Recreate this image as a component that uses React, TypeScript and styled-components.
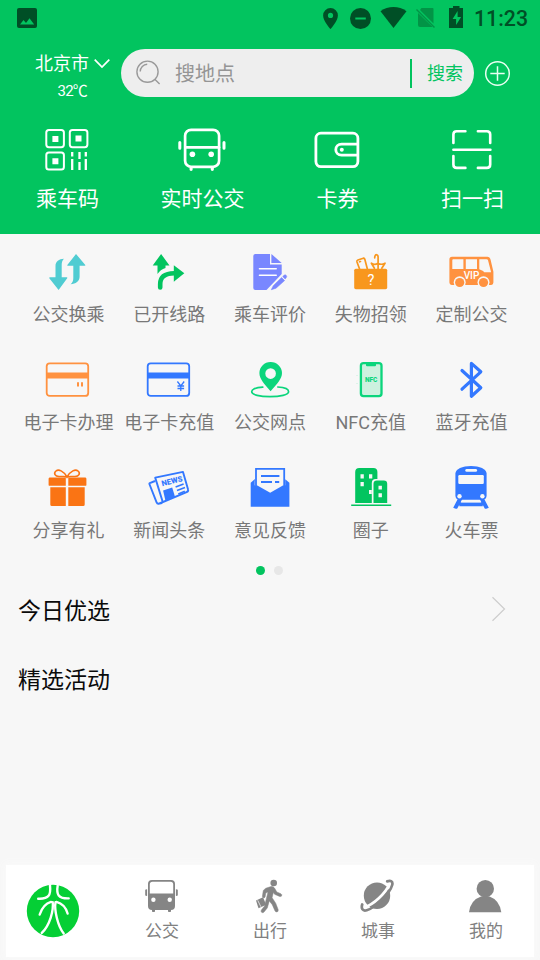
import React from "react";
import styled, { createGlobalStyle } from "styled-components";

const GREEN = "#02c45f";
const DARK = "#004f26";

const GlobalStyle = createGlobalStyle`
  * { box-sizing: border-box; }
  body {
    margin: 0;
    background: #f7f7f7;
    font-family: Roboto, "Noto Sans CJK SC", sans-serif;
  }
  svg { display: block; flex: none; }
`;

const Screen = styled.div`
  width: 540px;
  height: 960px;
  display: flex;
  flex-direction: column;
  background: #f7f7f7;
  overflow: hidden;
`;

const Header = styled.header`
  height: 234px;
  flex: none;
  background: ${GREEN};
  color: #fff;
`;

const StatusBar = styled.div`
  height: 36px;
  display: flex;
  justify-content: space-between;
  padding: 0 12px 0 16px;
`;

const StatusGroup = styled.div`
  display: flex;
  align-items: center;
`;

const Clock = styled.span`
  margin-left: 8px;
  width: 54px;
  font-size: 21.3px;
  font-weight: 500;
  line-height: 36px;
  color: ${DARK};
  white-space: nowrap;
  padding-top: 1px;
`;

const SearchRow = styled.div`
  height: 61px;
  padding: 13px 29px 0 35px;
  display: flex;
`;

const City = styled.div`
  width: 86px;
  flex: none;
  padding-top: 1px;
`;

const CityName = styled.div`
  display: flex;
  align-items: center;
  gap: 5px;
  height: 28px;
  font-size: 18px;
  line-height: 28px;
`;

const Temperature = styled.div`
  width: 52px;
  text-align: right;
  font-size: 15px;
  line-height: 26px;
  letter-spacing: -0.8px;
`;

const SearchBox = styled.div`
  width: 353px;
  height: 48px;
  flex: none;
  border-radius: 24px;
  background: #eee;
  display: flex;
  align-items: center;
  padding: 0 11px 0 14px;
`;

const Placeholder = styled.span`
  flex: 1;
  margin-left: 12px;
  padding-top: 2px;
  font-size: 20px;
  line-height: 46px;
  color: #959595;
`;

const SearchButton = styled.span`
  height: 29px;
  border-left: 2px solid ${GREEN};
  padding-left: 15px;
  font-size: 18px;
  line-height: 30px;
  color: ${GREEN};
`;

const AddButton = styled.div`
  margin: 11px 0 0 10px;
`;

const QuickActions = styled.div`
  display: grid;
  grid-template-columns: repeat(4, 1fr);
  padding-top: 25px;
`;

const QuickAction = styled.div`
  display: flex;
  flex-direction: column;
  align-items: center;
`;

const QuickLabel = styled.span`
  margin-top: 6px;
  font-size: 21px;
  line-height: 30px;
`;

const Services = styled.section`
  display: grid;
  grid-template-columns: repeat(5, 1fr);
  grid-auto-rows: 108px;
  padding: 14px 18px 0;
  height: 327px;
  flex: none;
`;

const Service = styled.div`
  display: flex;
  flex-direction: column;
  align-items: center;
`;

const ServiceLabel = styled.span`
  margin-top: 5px;
  font-size: 18px;
  line-height: 28px;
  color: #787878;
  white-space: nowrap;
`;

const Pager = styled.div`
  height: 14px;
  padding: 5px 1px 0 0;
  flex: none;
  display: flex;
  justify-content: center;
  gap: 9px;
`;

const Dot = styled.i<{ $active?: boolean }>`
  width: 9px;
  height: 9px;
  border-radius: 50%;
  background: ${(p) => (p.$active ? GREEN : "#e7e7e7")};
`;

const SectionTitle = styled.h2`
  height: 69px;
  margin: 0;
  padding: 0 33px 0 18px;
  display: flex;
  align-items: center;
  justify-content: space-between;
  font-size: 23px;
  font-weight: 400;
  color: #0a0a0a;
`;

const Sections = styled.main`
  flex: 1;
  min-height: 0;
  margin-top: -1px;
`;

const NavBar = styled.nav`
  height: 92px;
  flex: none;
  margin: 0 6.5px 3px 6px;
  background: #fff;
  box-shadow: 0 0 8px 2px #fafafa;
  display: flex;
`;

const NavItem = styled.div`
  width: 108px;
  flex: none;
  display: flex;
  flex-direction: column;
  align-items: center;
  padding-top: 13px;
  &:last-child { margin-right: -7px; }
`;

const LogoSlot = styled.div`
  width: 102px;
  flex: none;
  padding: 19px 0 0 20px;
`;

const NavLabel = styled.span`
  margin-top: 4px;
  font-size: 17px;
  line-height: 27px;
  color: #808080;
`;

const quick = [
  {
    label: "乘车码",
    icon: (
      <g fill="none" stroke="#fff" strokeWidth="2">
        <rect x="6.3" y="8" width="17.6" height="17.2" rx="2.6" />
        <rect x="29.8" y="8" width="17.6" height="17.2" rx="2.6" />
        <rect x="6.3" y="30.4" width="17.6" height="17.2" rx="2.6" />
        <path d="M12.400 14h6v6h-6zM35.500 13.500h6v6h-6zM12.400 36.200h6v6h-6z" fill="#fff" stroke="none" />
        <path d="M32.200 30v4.500M32.200 37v11M39.500 30v7M39.500 40v8M45.800 30v4.500M45.800 37v11" strokeWidth="2.300" />
      </g>
    ),
  },
  {
    label: "实时公交",
    icon: (
      <g fill="none" stroke="#fff" strokeWidth="2.700" strokeLinecap="round" transform="translate(-.9 0)">
        <rect x="11" y="7.800" width="34" height="37" rx="6" />
        <path d="M11.400 25.300h33.500" />
        <path d="M5.700 20.600v5.600M49.900 20.600v5.600" strokeWidth="3" />
        <path d="M17 46.500v.8M38.200 46.500v.8" strokeWidth="3.200" />
        <circle cx="18.300" cy="32.300" r="2.800" fill="#fff" stroke="none" />
        <circle cx="37.100" cy="32.300" r="2.800" fill="#fff" stroke="none" />
      </g>
    ),
  },
  {
    label: "卡券",
    icon: (
      <g fill="none" stroke="#fff" strokeWidth="2.800" transform="translate(-.9 0)">
        <rect x="6.800" y="11.200" width="42" height="33.400" rx="5" />
        <path d="M48.500 22.200h-16c-3.500 0-5.800 2.400-5.800 5.500s2.300 5.500 5.800 5.500h16" />
        <circle cx="32.700" cy="27.800" r="2" fill="#fff" stroke="none" />
      </g>
    ),
  },
  {
    label: "扫一扫",
    icon: (
      <g fill="none" stroke="#fff" strokeWidth="2.600" strokeLinecap="round" transform="translate(-.6 0)">
        <path d="M9 21V12.500Q9 9.200 12.300 9.200H21M33.500 9.200h9q3.300 0 3.300 3.300V21M9 34v8.500q0 3.400 3.300 3.400H21M33.500 45.900h9q3.300 0 3.300-3.400V34M9 27.700h37" />
      </g>
    ),
  },
];

const ORANGE = "#ff9240";
const BLUE = "#3378ff";
const MINT = "#0bd57c";

const Card = ({ color }: { color: string }) => (
  <>
    <rect x="2.700" y="7.300" width="41.500" height="32.600" rx="3" fill="none" stroke={color} strokeWidth="1.800" />
    <path d="M2.300 16.600h42.300v5.900H2.300z" fill={color} />
  </>
);

const services = [
  {
    label: "公交换乘",
    icon: (
      <g fill="#50ccd2">
        <path d="M14.600 42 5.300 30.200Q4.900 29.300 6 29.300h5.500V18c0-4.500 3.500-7 8.400-7.200-1.400 1.500-2.200 3.300-2.200 6v12.500h5q1 .1.500 1z" />
        <path d="m32 6 9.300 11q.4.800-.6.800h-5.100v11c0 4.500-3.800 7.200-9 7.500 1.900-1.600 2.700-3.700 2.700-6.400V17.800h-5.500q-1 0-.5-.8z" />
      </g>
    ),
  },
  {
    label: "已开线路",
    icon: (
      <g fill={GREEN}>
        <path d="m16.100 6 8.400 11.400h-4L20.500 20c-3.500 1.100-6 3.100-8 6v-8.500H7.700z" />
        <path d="M15.200 39.500V36q0-10.500 14-10.700" fill="none" stroke={GREEN} strokeWidth="4.600" strokeLinecap="round" />
        <path d="m28.800 17.300 10.500 8-10.500 8.500z" />
      </g>
    ),
  },
  {
    label: "乘车评价",
    icon: (
      <g fill="#7987ff">
        <path d="M9.400 6H24v10.500h11.700V26L20.500 42H9.400q-2.100 0-2.100-2.100V8.100Q7.300 6 9.400 6z" />
        <path d="m25.400 6 10.300 9H25.400z" />
        <path d="M13.500 20.700h16.700M13.500 27.300h16.700" stroke="#fff" strokeWidth="1.600" strokeLinecap="round" />
        <path d="m27.300 37.700 8.300-8.100 3 3-8.600 7.600-4.700 1.500zM36.700 28.600l1.400-1.300q1.100-.9 2.100.1t.1 2.100l-1.100 1.500z" stroke="#7987ff" strokeWidth=".6" />
      </g>
    ),
  },
  {
    label: "失物招领",
    icon: (
      <g>
        <g fill="none" stroke="#f8971d" strokeWidth="1.700" strokeLinecap="round" strokeLinejoin="round">
          <path d="m12.600 21-2.700-7.300q-.2-1.300 1-1.700l5.400-1.800q1.200-.2 1.500 1l2.500 9.500M12.500 13.800l1-.3" />
          <path d="M27.700 9.800c0-4.200 3.700-4 3.400 0V21M27.400 20.300l-3-5.100c2.500 1.700 4.300 1.500 6.500 0 2.400 1.500 4 1.700 7.100 0l-3.200 5.100" />
        </g>
        <rect x="7.200" y="20.700" width="33" height="20.500" rx="1.600" fill="#f8971d" />
        <text x="24" y="36.700" textAnchor="middle" fill="#fff" fontFamily="Roboto" fontSize="14.500">?</text>
      </g>
    ),
  },
  {
    label: "定制公交",
    icon: (
      <g>
        <path d="M4 8.700h35.300q2.600 0 3.300 3l2.800 12v10.800q0 2.400-2.200 2.400H3.700q-2.300 0-2.300-2.400V11.200Q1.400 8.700 4 8.700z" fill={ORANGE} />
        <g fill="#f7f7f7">
          <path d="M5.200 11.200h10.200V21H4.300v-8.800q0-1 .9-1zM17.800 11.200H29V21H17.800zM31.300 11.200h7.200q1.300 0 1.600 1.300l3 11.700h-6c-1 0-1.400-.4-2-1.300l-3.800-1.600z" />
          <circle cx="11.700" cy="34.300" r="6" /><circle cx="35.500" cy="34.300" r="6" />
        </g>
        <circle cx="11.700" cy="34.500" r="4.600" fill={ORANGE} /><circle cx="35.500" cy="34.500" r="4.600" fill={ORANGE} />
        <text x="23.500" y="31.200" textAnchor="middle" fill="#fff" fontFamily="Roboto" fontWeight="500" fontSize="10">VIP</text>
      </g>
    ),
  },
  {
    label: "电子卡办理",
    icon: (
      <g>
        <Card color={ORANGE} />
        <path d="M33 26.300h2v4.200h-2zM37 26.300h2v4.200h-2z" fill={ORANGE} />
      </g>
    ),
  },
  {
    label: "电子卡充值",
    icon: (
      <g>
        <Card color={BLUE} />
        <path d="m32.400 25.500 3.400 4.500 3.400-4.500M35.800 30v5M32.500 30h6.600M32.500 32.500h6.600" fill="none" stroke={BLUE} strokeWidth="1.300" />
      </g>
    ),
  },
  {
    label: "公交网点",
    icon: (
      <g>
        <path d="M24.600 6a11 11 0 0 0-11.200 11c0 6 4.600 10.500 11.200 18.200C31.200 27.500 36 23 36 17A11.200 11.200 0 0 0 24.600 6zm0 6.300a5.300 5.300 0 1 1 0 10.600 5.300 5.300 0 0 1 0-10.600z" fill={MINT} fillRule="evenodd" />
        <path d="M16.800 31.200C9 31.500 5.600 33.600 5.700 35.800c0 3 8.200 4.900 18.300 4.900s18.600-1.900 18.600-5c0-2.200-3.600-4.500-10.800-4.700" fill="none" stroke={MINT} strokeWidth="1.700" strokeLinecap="round" />
      </g>
    ),
  },
  {
    label: "NFC充值",
    icon: (
      <g>
        <rect x="13.900" y="7.200" width="20.600" height="33" rx="2.600" fill="#cdf1df" stroke={MINT} strokeWidth="2.300" />
        <path d="M19 7h10v2.300q0 1-1 1h-8q-1 0-1-1z" fill={MINT} />
        <path d="M10 19v1M10 27v1" stroke="#b5efd3" strokeWidth=".8" />
        <text x="24.200" y="26.200" textAnchor="middle" fill={MINT} fontFamily="Roboto" fontWeight="900" fontSize="6.500">NFC</text>
      </g>
    ),
  },
  {
    label: "蓝牙充值",
    icon: (
      <path d="m14 14.500 18.800 17.200-9.400 8.500V7.400l9.400 8.400L14 33.200" fill="none" stroke={BLUE} strokeWidth="3.200" strokeLinecap="round" strokeLinejoin="round" />
    ),
  },
  {
    label: "分享有礼",
    icon: (
      <g fill="#fa7414">
        <path d="M6 13.400h15.800v8.400H5.100q-.5 0-.5-.8v-6.200q0-1.400 1.400-1.400zM24.300 13.400H41q1.400 0 1.400 1.400V21q0 .8-.5.800H24.300zM6.300 23.200h15.500v18.700H7.800q-1.500 0-1.500-1.500zM24.300 23.200h16.400v17.200q0 1.500-1.500 1.500H24.300z" />
        <path d="M23 13c-3.500-6.300-8.500-8.100-11-6-2.700 2.300-1 5.300 3 5.500 3.500.1 6-.5 8 .5 2-1 4.500-.4 8-.5 4-.2 5.700-3.200 3-5.500-2.500-2.100-7.500-.3-11 6z" fill="none" stroke="#fa7414" strokeWidth="1.600" />
      </g>
    ),
  },
  {
    label: "新闻头条",
    icon: (
      <g>
        <path d="m10 17-5.200 2.100q-.6.300-.4.900l7.200 18.300q.8 2 2.800 1.200L41.600 28q2.100-.7 1.400-2.800L38 7.900 10.200 13.600l7 22.700q.9 3.400-3 3.300" fill="none" stroke={BLUE} strokeWidth="1.900" strokeLinejoin="round" />
        <path d="m18.100 26.400 9.100-2.800 2.800 9.100-9.500 4.400z" fill={BLUE} />
        <path d="m30.600 23 8-3M32 26.500l8-3M33.300 30l6.500-2.700" stroke={BLUE} strokeWidth="1.600" />
        <text x="17.300" y="22.200" transform="rotate(-14 17.300 22.200)" fill={BLUE} fontFamily="Roboto" fontWeight="900" fontSize="7.700">NEWS</text>
      </g>
    ),
  },
  {
    label: "意见反馈",
    icon: (
      <g fill={BLUE}>
        <path d="M4.700 18.700 9 15l-.3 2.800v3.400L24.200 30l15-8.800v-6l4.200 3.500v24H4.700z" />
        <path d="M10 21.800V4.800h28.200v17L24.200 29.900z" fill="#f7f7f7" stroke={BLUE} strokeWidth="1.800" />
        <path d="M15 12h18.400M15 18h11M29 18h4.200" stroke={BLUE} strokeWidth="1.800" />
      </g>
    ),
  },
  {
    label: "圈子",
    icon: (
      <g fill={GREEN}>
        <path d="M8.200 39V8q0-4 4-4h14.200q4 0 4 4v7h-1.600q-4 0-4 4v20z" />
        <path d="M26.500 39V19.800q0-3.400 3.400-3.400h6.900q3.400 0 3.400 3.400V39z" />
        <path d="M4.200 41.200h40" stroke={GREEN} strokeWidth="1.600" />
        <path d="M13.500 10.200h3.300v4.300h-3.300zM22 10.200h3.300v4.300H22zM13.500 18h3.300v4.300h-3.300zM22 26h2.800v4H22zM31.500 21.800h3.400v3.800h-3.400zM31.500 29.300h3.400v3.900h-3.400z" fill="#f7f7f7" />
      </g>
    ),
  },
  {
    label: "火车票",
    icon: (
      <g fill={BLUE}>
        <path d="M12.800 33.500 7 44.700M33.200 33.500 39 44.700M11.300 40.200h23.500" stroke={BLUE} strokeWidth="4" />
        <path d="M7.400 9.500C7.400 5 14.500 2 23 2s15.600 3 15.600 7.500v21.800q0 4.500-4.500 4.500H12q-4.600 0-4.600-4.500z" />
        <g fill="#f7f7f7">
          <rect x="10.300" y="11" width="25.500" height="9" rx="1.200" />
          <rect x="17.300" y="5" width="11.800" height="2.800" rx="1.400" />
          <circle cx="11.500" cy="32.300" r="2.200" /><circle cx="34.400" cy="32.300" r="2.200" />
          <path d="M14.200 36h17.600l1.200 2.500H13z M4 44.800h38V48H4z" />
        </g>
      </g>
    ),
  },
];

const nav = [
  {
    label: "公交",
    icon: (
      <g fill="#858585">
        <path d="M8 2h19q4 0 4 4v22q0 4-4 4v1.200q0 .8-.8.8h-1.400q-.8 0-.8-.8V32H11v1.200q0 .8-.8.800H8.800q-.8 0-.8-.8V32q-4 0-4-4V6q0-4 4-4zM1.200 12q0-.7 1.900-.7V18q-1.900 0-1.900-.7zM33.800 12q0-.7-1.900-.7V18q1.900 0 1.900-.7z" />
        <path d="M8.500 3.800h18q2.700 0 2.700 2.700v9H5.800v-9q0-2.700 2.700-2.700z" fill="#fff" />
        <circle cx="9.400" cy="21.800" r="2.200" fill="#fff" /><circle cx="25.700" cy="21.800" r="2.200" fill="#fff" />
      </g>
    ),
  },
  {
    label: "出行",
    icon: (
      <g fill="#858585">
        <circle cx="21.700" cy="5" r="3.300" />
        <path d="M13.800 10.200 19 8.600q2.300-.4 3.500 1.400l2.300 4 4 1.700q1.600.9.800 2.200-.7.900-2 .5l-5-2.100-1.300-1.700-1.200 5.100 3.600 5.500 2.500 6.500q.4 2-1.300 2.200-1.400.1-2-1.200l-2.600-6-3-3.800-2 7-3.300 4.200q-1.200 1.100-2.400.2-1-1-.2-2.300l3.200-4 3.400-14-2.200 1-.7 4q-.6 1.200-1.700.8-1-.4-1-1.500l.9-5.900z" stroke="#858585" strokeWidth=".5" />
        <path d="m4 22.500 7-3.200 3.200 7.500-7.700 3.500z" /><path d="m5.700 22.300 3.200 6.500" stroke="#fff" strokeWidth=".7" />
      </g>
    ),
  },
  {
    label: "城事",
    icon: (
      <g>
        <circle cx="17" cy="17.700" r="13.200" fill="#858585" />
        <path d="M4 29.500C13.500 26.500 25.500 15.500 29.500 6" fill="none" stroke="#fff" strokeWidth="2.800" />
        <path d="M2.200 26.500c-1.200 4 .4 7 4.600 5.700C16.500 29 29.800 15.500 32.200 7c1-3.700-1.500-4.800-5-3.600" fill="none" stroke="#858585" strokeWidth="2.700" strokeLinecap="round" />
      </g>
    ),
  },
  {
    label: "我的",
    icon: (
      <g fill="#858585">
        <circle cx="17.300" cy="10.700" r="8.700" />
        <path d="M1 34.300Q2.500 22 13 18.500h8.500Q31.500 22 33.300 34.300z" />
      </g>
    ),
  },
];

const StatusIcons = () => (
  <svg width="146" height="36" viewBox="320 0 146 36" fill={DARK}>
    <path d="M330.500 8a7.400 7.400 0 0 0-7.400 7.400c0 5.500 7.400 13.600 7.400 13.600s7.400-8.100 7.400-13.600a7.400 7.400 0 0 0-7.400-7.400zm0 4.800a2.600 2.600 0 1 1 0 5.200 2.600 2.600 0 0 1 0-5.200z" fillRule="evenodd" />
    <circle cx="360.500" cy="18.500" r="10.500" />
    <path d="M355.300 18.500h10.500" stroke={GREEN} strokeWidth="2" />
    <path d="M380.500 11.300c7.500-5.600 18.500-5.600 26 0L393.500 28z" />
    <g fill="#029446">
      <path d="m421.500 8 11 .1q1 0 1 1v14.500L420 10zM418 13l14.600 14h-12.500q-2.100 0-2.100-2.100z" />
      <path d="m416.500 9.500 18 18" stroke="#029446" strokeWidth="1.500" />
    </g>
    <path d="M453 6h6.500v2h3.500v20h-14V8h4zM457.600 11l-5 8h3.500v6l5-8h-3.500z" fillRule="evenodd" />
  </svg>
);

export default function App() {
  return (
    <>
      <GlobalStyle />
      <Screen>
        <Header>
          <StatusBar>
            <StatusGroup>
              <svg width="22" height="36" viewBox="16 0 22 36">
                <rect x="17" y="8" width="20" height="20" rx="2" fill={DARK} />
                <path d="m20 24.500 3.500-4.500 2.500 3 3.500-4.800 4.700 6.300z" fill={GREEN} />
              </svg>
            </StatusGroup>
            <StatusGroup>
              <StatusIcons />
              <Clock>11:23</Clock>
            </StatusGroup>
          </StatusBar>
          <SearchRow>
            <City>
              <CityName>
                北京市
                <svg width="16" height="10" viewBox="0 0 16 10" fill="none" stroke="#fff" strokeWidth="1.700">
                  <path d="m.7.700 7.300 7.300 7.300-7.300" />
                </svg>
              </CityName>
              <Temperature>32℃</Temperature>
            </City>
            <SearchBox>
              <svg width="28" height="28" viewBox="0 0 28 28" fill="none" stroke="#999" strokeWidth="1.400">
                <circle cx="12.500" cy="12.700" r="10.600" />
                <path d="m19.800 20.300 4.800 4.800M5.200 12.500a7.500 7.500 0 0 1 7-7.300" />
              </svg>
              <Placeholder>搜地点</Placeholder>
              <SearchButton>搜索</SearchButton>
            </SearchBox>
            <AddButton>
              <svg width="27" height="27" viewBox="0 0 27 27" fill="none" stroke="#e9fff2" strokeWidth="1.500">
                <circle cx="13.500" cy="13.500" r="11.800" />
                <path d="M6.300 13.500h14.400M13.500 6.300v14.400" />
              </svg>
            </AddButton>
          </SearchRow>
          <QuickActions>
            {quick.map((q) => (
              <QuickAction key={q.label}>
                <svg width="56" height="56" viewBox="0 0 56 56">{q.icon}</svg>
                <QuickLabel>{q.label}</QuickLabel>
              </QuickAction>
            ))}
          </QuickActions>
        </Header>
        <Services>
          {services.map((s) => (
            <Service key={s.label}>
              <svg width="48" height="48" viewBox="0 0 48 48">{s.icon}</svg>
              <ServiceLabel>{s.label}</ServiceLabel>
            </Service>
          ))}
        </Services>
        <Pager>
          <Dot $active />
          <Dot />
        </Pager>
        <Sections>
          <SectionTitle>
            今日优选
            <svg width="16" height="26" viewBox="0 0 16 26" fill="none" stroke="#cdcdcd" strokeWidth="1.200">
              <path d="m1.500 1.300 12 11.700-12 11.700" />
            </svg>
          </SectionTitle>
          <SectionTitle>精选活动</SectionTitle>
        </Sections>
        <NavBar>
          <LogoSlot>
            <svg width="54" height="54" viewBox="0 0 54 54">
              <circle cx="27" cy="27" r="26.200" fill="#05cf35" />
              <g fill="none" stroke="#fff" strokeWidth="2.400" strokeLinecap="round">
                <path d="M24 1.500C25 11 23 15.200 12.200 14.700M31.700 1.500c-1.500 9 .5 13.200 11 12.900" />
                <path d="M13.700 30.500C15.500 25 19.500 19.500 25 17.900M26.700 18.200C27.800 26 24 41 15.800 48.900M41.600 29.500C40 24 36 19.300 30.500 17.900M29.500 18.200c-1.300 7.500 2 23.500 8.200 31.300" />
              </g>
            </svg>
          </LogoSlot>
          {nav.map((n) => (
            <NavItem key={n.label}>
              <svg width="36" height="36" viewBox="0 0 36 36">{n.icon}</svg>
              <NavLabel>{n.label}</NavLabel>
            </NavItem>
          ))}
        </NavBar>
      </Screen>
    </>
  );
}
